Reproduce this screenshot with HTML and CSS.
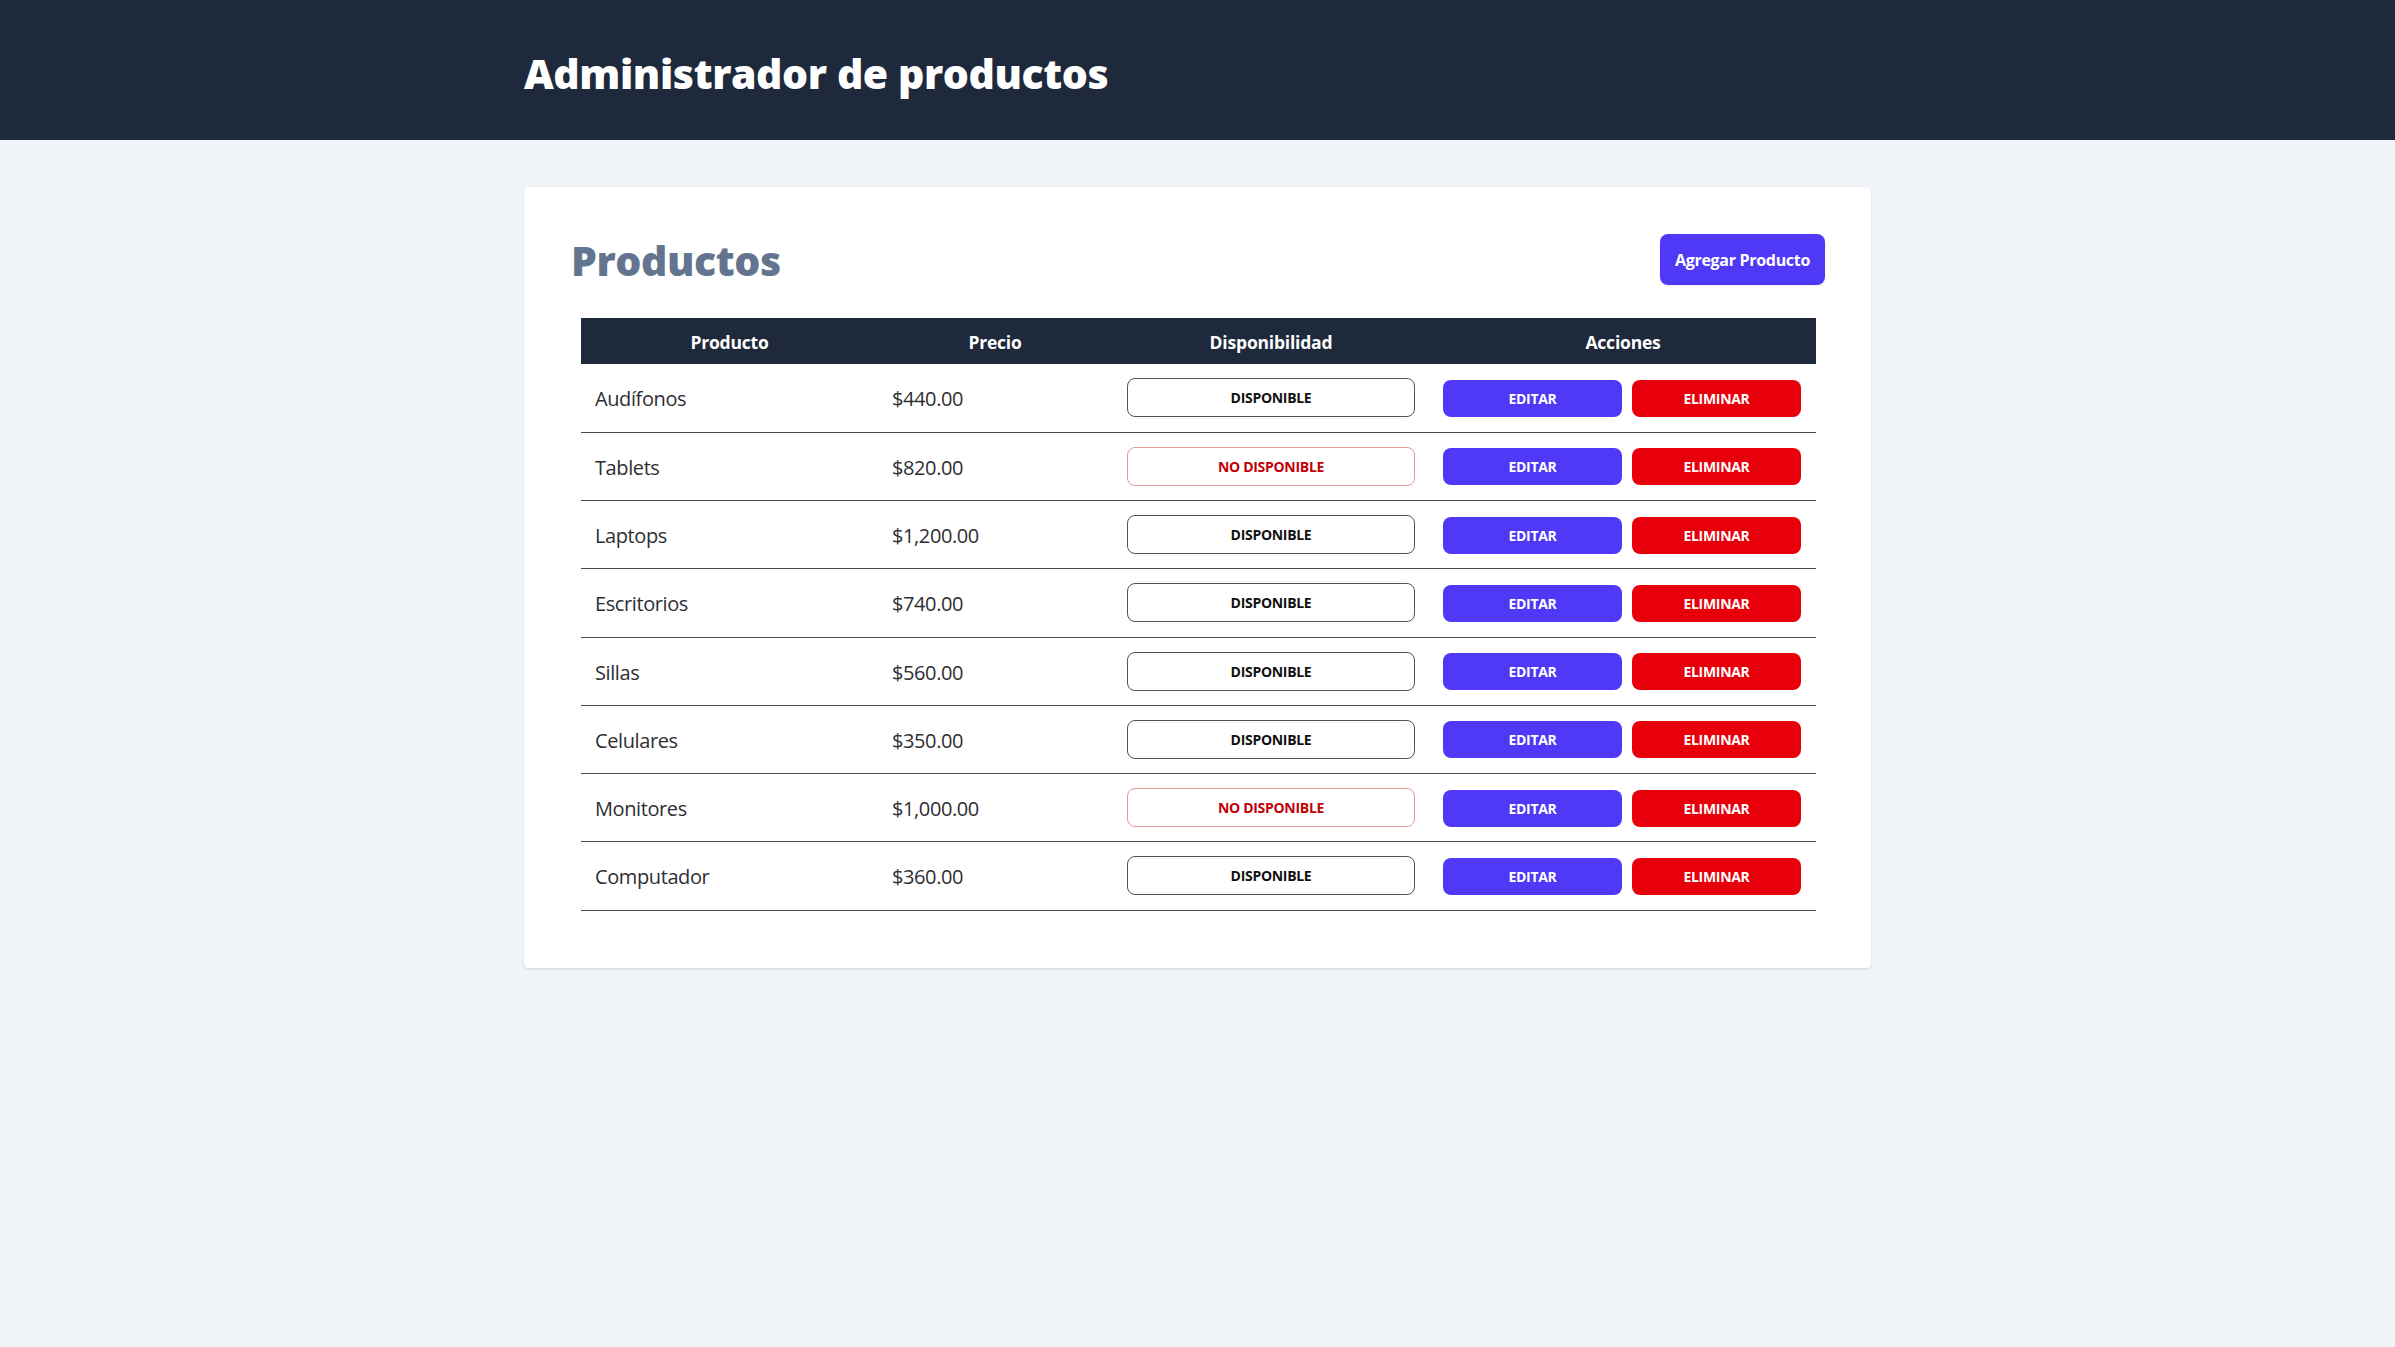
FILE: index.html
```html
<!DOCTYPE html>
<html lang="es">
<head>
<meta charset="utf-8">
<title>Administrador de productos</title>
<link rel="stylesheet" href="styles.css">
</head>
<body>
<header class="topbar">
  <div class="container">
    <h1 class="app-title">Administrador de productos</h1>
  </div>
</header>
<main class="main">
  <section class="card">
    <div class="card-head">
      <h2 class="card-title">Productos</h2>
      <button class="btn-add">Agregar Producto</button>
    </div>
    <div class="table-wrap">
      <table class="products">
        <colgroup>
          <col class="c1"><col class="c2"><col class="c3"><col class="c4">
        </colgroup>
        <thead>
          <tr><th>Producto</th><th>Precio</th><th>Disponibilidad</th><th>Acciones</th></tr>
        </thead>
        <tbody>
          <tr><td>Audífonos</td><td>$440.00</td><td><span class="status ok">DISPONIBLE</span></td><td><div class="actions"><button class="btn edit">EDITAR</button><button class="btn del">ELIMINAR</button></div></td></tr>
          <tr><td>Tablets</td><td>$820.00</td><td><span class="status no">NO DISPONIBLE</span></td><td><div class="actions"><button class="btn edit">EDITAR</button><button class="btn del">ELIMINAR</button></div></td></tr>
          <tr><td>Laptops</td><td>$1,200.00</td><td><span class="status ok">DISPONIBLE</span></td><td><div class="actions"><button class="btn edit">EDITAR</button><button class="btn del">ELIMINAR</button></div></td></tr>
          <tr><td>Escritorios</td><td>$740.00</td><td><span class="status ok">DISPONIBLE</span></td><td><div class="actions"><button class="btn edit">EDITAR</button><button class="btn del">ELIMINAR</button></div></td></tr>
          <tr><td>Sillas</td><td>$560.00</td><td><span class="status ok">DISPONIBLE</span></td><td><div class="actions"><button class="btn edit">EDITAR</button><button class="btn del">ELIMINAR</button></div></td></tr>
          <tr><td>Celulares</td><td>$350.00</td><td><span class="status ok">DISPONIBLE</span></td><td><div class="actions"><button class="btn edit">EDITAR</button><button class="btn del">ELIMINAR</button></div></td></tr>
          <tr><td>Monitores</td><td>$1,000.00</td><td><span class="status no">NO DISPONIBLE</span></td><td><div class="actions"><button class="btn edit">EDITAR</button><button class="btn del">ELIMINAR</button></div></td></tr>
          <tr><td>Computador</td><td>$360.00</td><td><span class="status ok">DISPONIBLE</span></td><td><div class="actions"><button class="btn edit">EDITAR</button><button class="btn del">ELIMINAR</button></div></td></tr>
        </tbody>
      </table>
    </div>
  </section>
</main>
</body>
</html>
```

FILE: styles.css
```css
* { box-sizing: border-box; }
html, body { margin: 0; padding: 0; }
body {
  background: #f1f5f9;
  font-family: "Open Sans", "Noto Sans", "Liberation Sans", sans-serif;
  color: #1e293b;
  min-height: 100vh;
}
.topbar {
  background: #1e293b;
  height: 140px;
  display: flex;
  align-items: center;
}
.container {
  width: 1347px;
  margin: 0 auto;
}
.app-title {
  margin: 0;
  color: #ffffff;
  font-size: 41px;
  font-weight: 800;
  letter-spacing: -0.4px;
  line-height: 1;
  padding-top: 6px;
}
.main {
  padding-top: 47px;
}
.card {
  width: 1347px;
  margin: 0 auto;
  background: #ffffff;
  border-radius: 4px;
  box-shadow: 0 1px 3px rgba(15, 23, 42, 0.10), 0 1px 2px rgba(15, 23, 42, 0.06);
  padding: 47px 46px 47px 47px;
}
.card-head {
  display: flex;
  justify-content: space-between;
  align-items: center;
  height: 51px;
}
.card-title {
  margin: 0;
  font-size: 41px;
  font-weight: 800;
  color: #62748e;
  letter-spacing: -0.4px;
  line-height: 1;
  padding-top: 2px;
}
.btn-add {
  width: 165px;
  height: 51px;
  border: 0;
  border-radius: 8px;
  background: #4f39f6;
  color: #ffffff;
  font-family: inherit;
  font-size: 16px;
  font-weight: 700;
  letter-spacing: -0.3px;
  cursor: pointer;
  box-shadow: 0 1px 2px rgba(0,0,0,0.08);
}
.table-wrap {
  margin-top: 33px;
  padding: 0 9px 10px 10px;
}
.products {
  width: 1235px;
  border-collapse: collapse;
  table-layout: fixed;
}
.c1 { width: 297px; }
.c2 { width: 234px; }
.c3 { width: 318px; }
.c4 { width: 386px; }
.products thead tr {
  background: #1e293b;
}
.products th {
  height: 46px;
  color: #ffffff;
  font-size: 17.5px;
  font-weight: 700;
  text-align: center;
  padding: 2px 14px 0;
  letter-spacing: -0.2px;
}
.products td {
  height: 68.25px;
  padding: 2px 14px 0 14px;
  font-size: 20px;
  color: #2e2e33;
  border-bottom: 1px solid #4a4a4a;
  vertical-align: middle;
  letter-spacing: -0.4px;
}
.products td:nth-child(3) {
  padding: 0 15px 0 15px;
}
.products td:nth-child(4) {
  padding: 0 14px 0 13px;
}
.status {
  display: flex;
  align-items: center;
  justify-content: center;
  height: 39px;
  border-radius: 8px;
  font-size: 14px;
  font-weight: 700;
  letter-spacing: -0.3px;
}
.status.ok {
  border: 1px solid #52525b;
  color: #111111;
}
.status.no {
  border: 1px solid #e09a9a;
  color: #c10007;
}
.actions {
  display: flex;
  gap: 10px;
  padding-top: 1px;
}
.btn {
  height: 37px;
  border: 0;
  border-radius: 8px;
  color: #ffffff;
  font-family: inherit;
  font-size: 14px;
  font-weight: 700;
  letter-spacing: -0.3px;
  cursor: pointer;
}
.btn.edit { width: 179px; background: #4f39f6; }
.btn.del { width: 169px; background: #e7000b; }
```
